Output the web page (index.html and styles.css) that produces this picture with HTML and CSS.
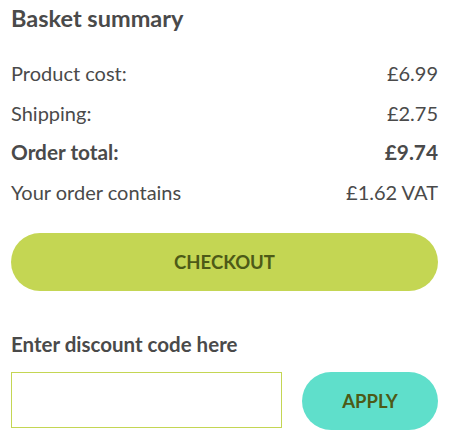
FILE: index.html
```html
<!DOCTYPE html>
<html>
<head>
<meta charset="utf-8">
<link rel="stylesheet" href="styles.css">
</head>
<body>
<div class="summary">
  <h2 class="title">Basket summary</h2>
  <div class="row"><span>Product cost:</span><span>£6.99</span></div>
  <div class="row"><span>Shipping:</span><span>£2.75</span></div>
  <div class="row total"><span>Order total:</span><span>£9.74</span></div>
  <div class="row"><span>Your order contains</span><span>£1.62 VAT</span></div>
  <button class="checkout">CHECKOUT</button>
  <label class="discount-label">Enter discount code here</label>
  <div class="discount">
    <input class="code" type="text">
    <button class="apply">APPLY</button>
  </div>
</div>
</body>
</html>
```
FILE: styles.css
```css
html, body { margin: 0; padding: 0; background: #fff; }
body { font-family: Lato, "Open Sans", sans-serif; color: #4a4a4a; }
.summary { padding: 4px 15px 0 11px; display: flex; flex-direction: column; }
.title { font-size: 23.5px; font-weight: 700; margin: 0 0 29px; line-height: 28px; }
.row { display: flex; justify-content: space-between; font-size: 20px; line-height: 24px; margin-bottom: 15.5px; }
.total { font-weight: 700; font-size: 20.8px; }
.checkout { margin-top: 14px; height: 58px; border: none; border-radius: 29px; background: #c4d653; color: #4d5a17; font-family: Lato, sans-serif; font-weight: 700; font-size: 18.5px; padding: 0; }
.discount-label { margin-top: 40px; font-size: 20.5px; font-weight: 700; line-height: 26px; }
.discount { display: flex; gap: 20px; margin-top: 15px; align-items: flex-start; }
.code { width: 271px; height: 56px; box-sizing: border-box; border: 1px solid #c4d653; margin: 0; padding: 0 8px; }
.apply { flex: 1; height: 58px; border: none; border-radius: 29px; background: #5fdfcb; color: #4d5a17; font-family: Lato, sans-serif; font-weight: 700; font-size: 18.5px; padding: 0; }
```
